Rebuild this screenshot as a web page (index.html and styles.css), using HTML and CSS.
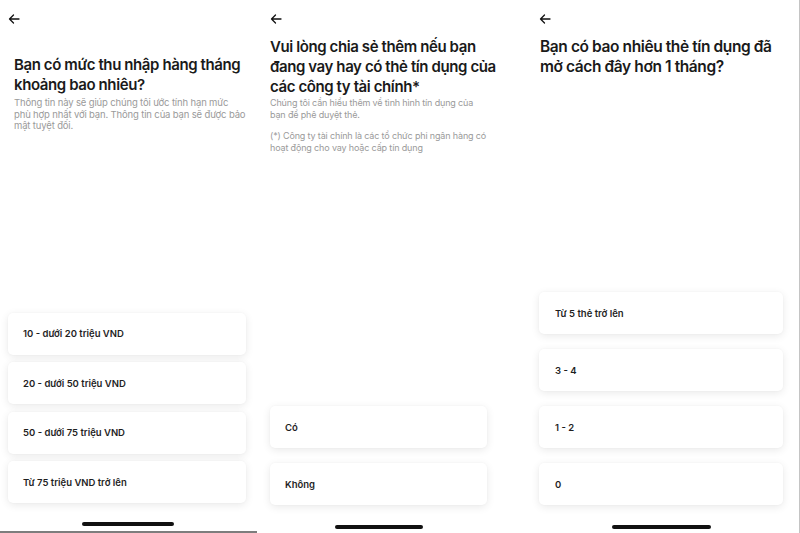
FILE: index.html
```html
<!DOCTYPE html>
<html lang="vi">
<head>
<meta charset="utf-8">
<title>Khảo sát</title>
<link rel="stylesheet" href="styles.css">
</head>
<body>
<div class="strip">
  <section class="screen s1">
    <svg class="back" width="12" height="10" viewBox="0 0 12 10"><path d="M11 5H1.5M5.5 1 1.5 5l4 4" fill="none" stroke="#111" stroke-width="1.3" stroke-linecap="round" stroke-linejoin="round"/></svg>
    <h1 class="title">Bạn có mức thu nhập hàng tháng khoảng bao nhiêu?</h1>
    <p class="sub">Thông tin này sẽ giúp chúng tôi ước tính hạn mức phù hợp nhất với bạn. Thông tin của bạn sẽ được bảo mật tuyệt đối.</p>
    <div class="options">
      <div class="card">10 - dưới 20 triệu VND</div>
      <div class="card">20 - dưới 50 triệu VND</div>
      <div class="card">50 - dưới 75 triệu VND</div>
      <div class="card">Từ 75 triệu VND trở lên</div>
    </div>
    <div class="home"></div>
  </section>
  <section class="screen s2">
    <svg class="back" width="12" height="10" viewBox="0 0 12 10"><path d="M11 5H1.5M5.5 1 1.5 5l4 4" fill="none" stroke="#111" stroke-width="1.3" stroke-linecap="round" stroke-linejoin="round"/></svg>
    <h1 class="title">Vui lòng chia sẻ thêm nếu bạn đang vay hay có thẻ tín dụng của các công ty tài chính*</h1>
    <p class="sub">Chúng tôi cần hiểu thêm về tình hình tín dụng của bạn để phê duyệt thẻ.</p>
    <p class="sub note">(*) Công ty tài chính là các tổ chức phi ngân hàng có hoạt động cho vay hoặc cấp tín dụng</p>
    <div class="options">
      <div class="card">Có</div>
      <div class="card">Không</div>
    </div>
    <div class="home"></div>
  </section>
  <section class="screen s3">
    <svg class="back" width="12" height="10" viewBox="0 0 12 10"><path d="M11 5H1.5M5.5 1 1.5 5l4 4" fill="none" stroke="#111" stroke-width="1.3" stroke-linecap="round" stroke-linejoin="round"/></svg>
    <h1 class="title">Bạn có bao nhiêu thẻ tín dụng đã mở cách đây hơn 1 tháng?</h1>
    <div class="options">
      <div class="card">Từ 5 thẻ trở lên</div>
      <div class="card">3 - 4</div>
      <div class="card">1 - 2</div>
      <div class="card">0</div>
    </div>
    <div class="home"></div>
  </section>
</div>
</body>
</html>
```
FILE: styles.css
```css
* { box-sizing: border-box; }
html, body { margin: 0; padding: 0; background: #fff; }
body { font-family: Inter, "Noto Sans", "Liberation Sans", sans-serif; color: #1a1a1a; }
.strip { display: flex; width: 800px; height: 533px; overflow: hidden; }
.screen { display: flex; flex-direction: column; height: 533px; background: #fff; }
.s1 { width: 257px; padding: 0 2px 0 8px; border-bottom: 2px solid #7d7d7d; }
.s2 { width: 263px; padding: 0 6px 0 13px; }
.s3 { width: 280px; padding: 0 16px 0 19px; border-right: 1px solid #c4c4c4; }
.back { display: block; flex: none; margin-top: 14px; }
.title { margin: 0; font-size: 15px; line-height: 20px; font-weight: 600; letter-spacing: -0.4px; }
.s1 .title { margin: 31px 0 0 6px; }
.s2 .title { margin: 13px 0 0 0; max-width: 227px; }
.s3 .title { margin: 13px 0 0 1px; font-size: 15.5px; }
.sub { margin: 6px 0 0; font-size: 9.5px; line-height: 11.5px; color: #9a9a9a; letter-spacing: -0.15px; }
.s1 .sub { margin: 2px 0 0 6px; max-width: 232px; }
.s2 .sub { margin-top: 0; font-size: 9px; max-width: 210px; }
.s2 .note { margin-top: 10px; max-width: 224px; }
.options { margin-top: auto; display: flex; flex-direction: column; gap: 7.5px; }
.s1 .options { margin-right: 9px; }
.s2 .options { margin-right: 27px; }
.s2 .options, .s3 .options { gap: 15px; }
.card { height: 42px; display: flex; align-items: center; padding-left: 15px; background: #fff; border-radius: 5px; box-shadow: 0 2px 8px rgba(0,0,0,0.09), 0 0 2px rgba(0,0,0,0.04); font-size: 9.5px; font-weight: 600; color: #1f1f1f; }
.s3 .card { padding-left: 16px; }
.home { flex: none; align-self: center; width: 92px; height: 4px; border-radius: 2px; background: #111; margin: 19px 7px 5px 0; }
.s2 .home { width: 88px; margin: 20px 26px 4px 0; }
.s3 .home { width: 99px; margin: 20px 0 4px; }
```
